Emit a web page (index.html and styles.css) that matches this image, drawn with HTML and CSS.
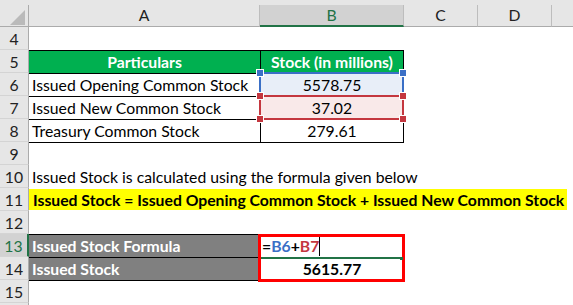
FILE: index.html
```html
<!DOCTYPE html>
<html>
<head>
<meta charset="utf-8">
<title>Issued Stock</title>
<link rel="stylesheet" href="styles.css">
</head>
<body>
<div class="app">
  <div class="grid">
    <div class="corner"><span class="tri"></span></div>
    <div class="ch">A</div>
    <div class="ch sel">B</div>
    <div class="ch">C</div>
    <div class="ch">D</div>
    <div class="ch last"></div>

    <div class="rh">4</div>

    <div class="rh">5</div>
    <div class="c bt head num">Particulars</div>
    <div class="c bt bl br head num">Stock (in millions)</div>

    <div class="rh">6</div>
    <div class="c bt">Issued Opening Common Stock</div>
    <div class="c bt bl br num rng-blue">5578.75<span class="rng"></span><i class="hd h-tl"></i><i class="hd h-tr"></i><i class="hd h-bl"></i><i class="hd h-br"></i></div>

    <div class="rh">7</div>
    <div class="c bt">Issued New Common Stock</div>
    <div class="c bt bl br num rng-red">37.02<span class="rng"></span><i class="hd h-tl"></i><i class="hd h-tr"></i><i class="hd h-bl"></i><i class="hd h-br"></i></div>

    <div class="rh">8</div>
    <div class="c bt bb">Treasury Common Stock</div>
    <div class="c bt bl br bb num">279.61</div>

    <div class="rh">9</div>

    <div class="rh">10</div>
    <div class="c wide">Issued Stock is calculated using the formula given below</div>

    <div class="rh">11</div>
    <div class="c wide hl">Issued Stock = Issued Opening Common Stock + Issued New Common Stock</div>

    <div class="rh">12</div>

    <div class="rh sel">13</div>
    <div class="c bt gray">Issued Stock Formula</div>
    <div class="fx">
      <div class="c fx-formula">=<span class="ref-b">B6</span>+<span class="ref-r">B7</span><span class="caret"></span></div>
      <div class="c fx-result">5615.77<i class="fill"></i></div>
    </div>

    <div class="rh">14</div>
    <div class="c bt bb gray">Issued Stock</div>

    <div class="rh">15</div>
    <div class="rh"></div>
  </div>
</div>
</body>
</html>
```

FILE: styles.css
```css
* {
  box-sizing: border-box;
  margin: 0;
  padding: 0;
}

html,
body {
  width: 573px;
  height: 305px;
  overflow: hidden;
  background: #fff;
}

body {
  font-family: Lato, "Open Sans", "Liberation Sans", sans-serif;
  font-size: 15.75px;
  color: #000;
}

.app {
  background: #e6e6e6;
  padding-top: 5px;
  height: 305px;
}

.grid {
  display: grid;
  grid-template-columns: 29px 231px 144px 74px 74px 1fr;
  grid-template-rows: 22px;
  grid-auto-rows: 23px;
  background: #fff;
  height: 300px;
  overflow: hidden;
}

/* column headers */
.corner {
  position: relative;
  background: #e6e6e6;
  border-right: 1px solid #ababab;
  border-bottom: 1px solid #ababab;
}

.tri {
  position: absolute;
  right: 3px;
  bottom: 1px;
  width: 0;
  height: 0;
  border-left: 15px solid transparent;
  border-bottom: 15px solid #bababa;
}

.ch {
  background: #e6e6e6;
  border-right: 1px solid #bdbdbd;
  border-bottom: 1px solid #ababab;
  text-align: center;
  padding-top: 1px;
  line-height: 18px;
  color: #222;
}

.ch.sel {
  background: #d2d2d2;
  border-bottom: 2px solid #217346;
  color: #217346;
}

.ch.last {
  border-right: none;
}

/* row headers */
.rh {
  grid-column: 1;
  background: #e6e6e6;
  border-right: 1px solid #ababab;
  border-bottom: 1px solid #d4d4d4;
  text-align: center;
  padding-top: 3px;
  line-height: 18px;
  color: #222;
}

.rh.sel {
  background: #d2d2d2;
  border-right: 2px solid #217346;
  color: #217346;
}

/* sheet cells */
.c {
  padding: 3px 3px 0;
  line-height: 18px;
  white-space: nowrap;
  color: #000;
}

.bt {
  border-top: 1px solid #000;
  padding-top: 2px;
}

.bl {
  border-left: 1px solid #000;
}

.br {
  border-right: 1px solid #000;
}

.bb {
  box-shadow: 0 1px 0 #000;
}

.num {
  text-align: center;
}

.head {
  background: #00b050;
  color: #fff;
  font-weight: bold;
}

.wide {
  grid-column: 2 / -1;
}

.hl {
  background: #ffff00;
  font-weight: bold;
  margin: 1px 6px 1px 0;
  padding-top: 2px;
  padding-left: 4px;
}

.gray {
  background: #808080;
  color: #fff;
  font-weight: bold;
}

/* range highlights */
.rng-blue,
.rng-red {
  position: relative;
}

.rng-blue {
  background: #e8eef8;
}

.rng-red {
  background: #f9e9e9;
}

.rng {
  position: absolute;
  top: -2px;
  left: -2px;
  right: -1px;
  bottom: -1px;
  border: 2px solid;
}

.rng-blue .rng {
  border-color: #3a6fc6;
}

.rng-red .rng {
  border-color: #c4373f;
}

.hd {
  position: absolute;
  width: 6px;
  height: 6px;
  box-shadow: 0 0 0 1px #fff;
}

.rng-blue .hd {
  background: #3a6fc6;
}

.rng-red .hd {
  background: #c4373f;
}

.h-tl {
  left: -4px;
  top: -4px;
}

.h-tr {
  right: -3px;
  top: -4px;
}

.h-bl {
  left: -4px;
  bottom: -3px;
}

.h-br {
  right: -3px;
  bottom: -3px;
}

/* formula cell pair */
.fx {
  grid-column: 3;
  grid-row: span 2;
  position: relative;
  display: grid;
  grid-template-rows: 23px 23px;
}

.fx::after {
  content: "";
  position: absolute;
  top: 0;
  left: -2px;
  right: -1px;
  bottom: -2px;
  border: 3px solid #ff0000;
}

.fx-formula {
  position: relative;
  font-weight: bold;
  padding-left: 2px;
}

.ref-b {
  color: #3a6fc6;
}

.ref-r {
  color: #c4373f;
}

.caret {
  position: absolute;
  left: 59px;
  top: 1px;
  width: 1px;
  height: 21px;
  background: #000;
}

.fx-result {
  position: relative;
  border-top: 2px solid #217346;
  padding-top: 1px;
  text-align: center;
  font-weight: bold;
}

.fill {
  position: absolute;
  right: 1px;
  top: -2px;
  width: 3px;
  height: 3px;
  background: #217346;
  z-index: 1;
}
```
